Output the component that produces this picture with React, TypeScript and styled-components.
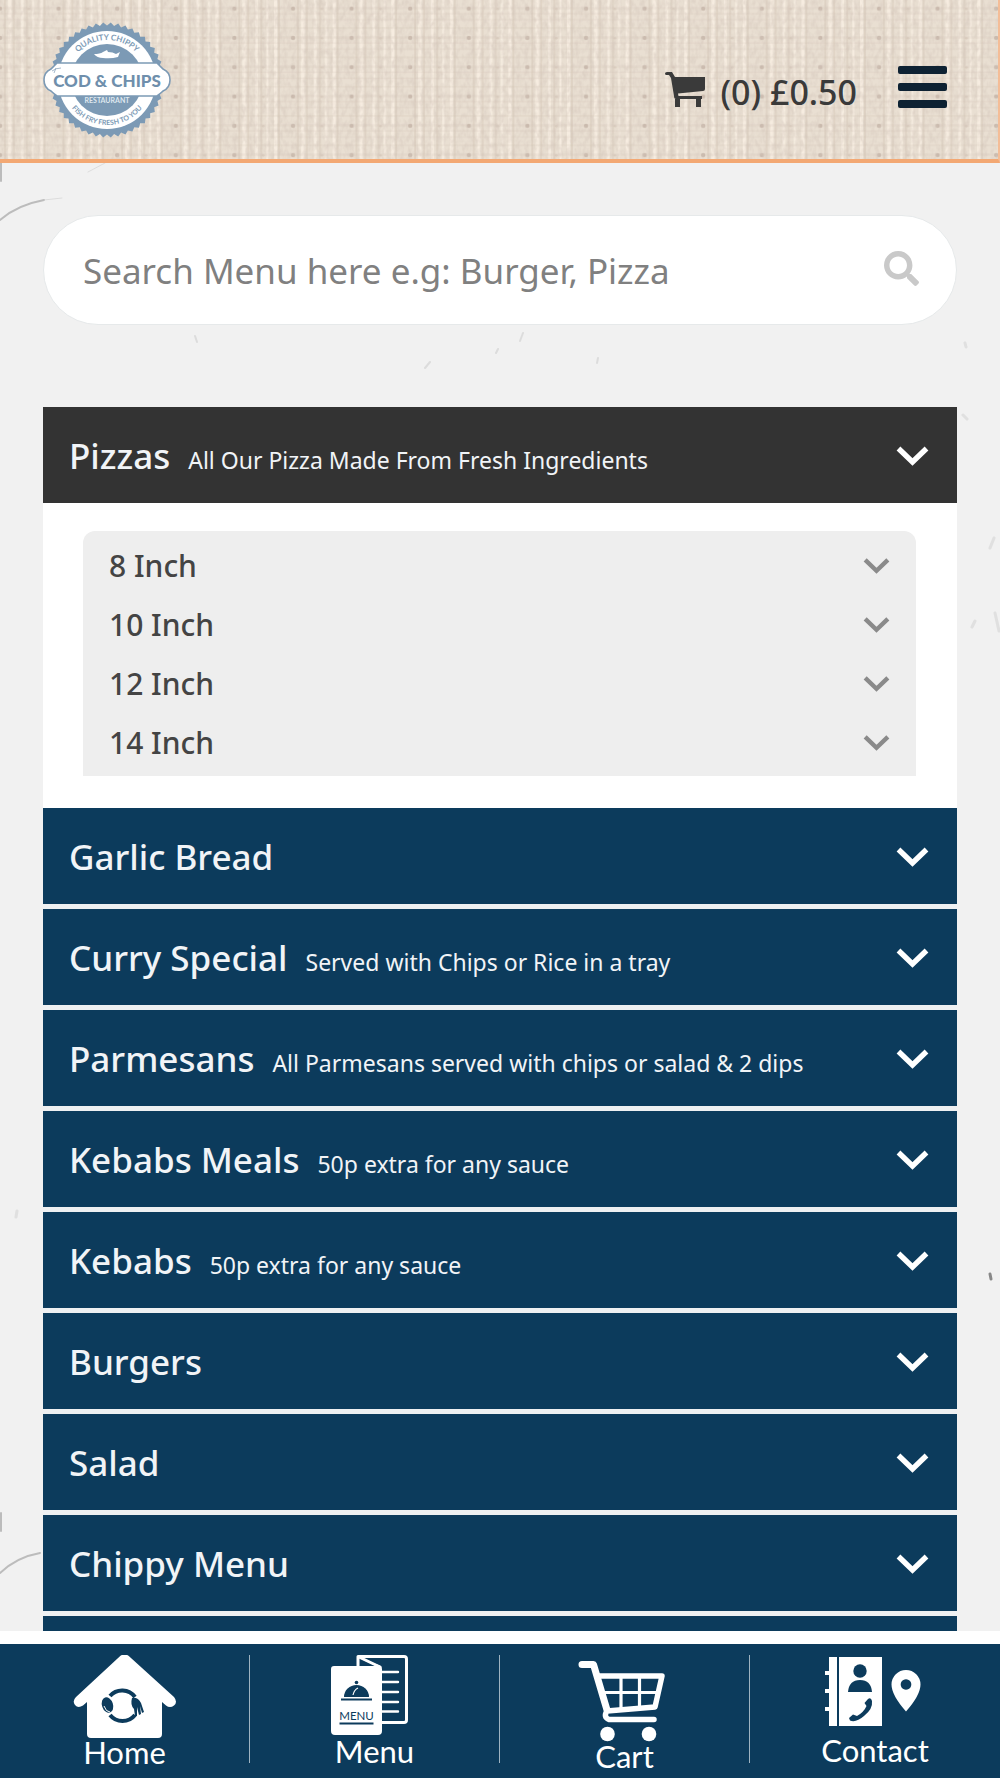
import React, { useState } from "react";
import styled, { createGlobalStyle } from "styled-components";
import { FaSearch } from "react-icons/fa";

const sans = `"Noto Sans", "Open Sans", "Liberation Sans", sans-serif`;
const navy = "#0c3b5c";

const GlobalStyle = createGlobalStyle`
  *, *::before, *::after { box-sizing: border-box; }
  body { margin: 0; background: #f1f1f1; font-family: ${sans}; color: #333; }
  button, input { font: inherit; color: inherit; }
`;

const Screen = styled.div`
  display: flex;
  flex-direction: column;
  height: 100vh;
`;

const Header = styled.header`
  position: relative;
  display: flex;
  align-items: center;
  justify-content: space-between;
  flex: none;
  padding: 20px 51px 20px 40px;
  border-bottom: 4px solid #f3a873;
  border-right: 2px solid #f4bd97;
  background: #e9dfd2;
`;

const Fabric = styled.svg`
  position: absolute;
  inset: 0;
  width: 100%;
  height: 100%;
`;

const LogoLink = styled.a`
  position: relative;
  display: block;
  line-height: 0;
`;

const HeaderActions = styled.div`
  position: relative;
  display: flex;
  align-items: center;
  gap: 41px;
  padding-top: 20px;
`;

const Basket = styled.a`
  display: flex;
  align-items: flex-end;
  gap: 15px;
  padding-top: 4px;
  color: #3a3a3a;
  font-size: 34px;
  line-height: 44px;
  font-weight: 500;
  text-decoration: none;
  svg { margin-bottom: 5px; }
`;

const MenuToggle = styled.button`
  display: flex;
  flex-direction: column;
  gap: 9px;
  width: 49px;
  margin-bottom: 6px;
  padding: 0;
  border: 0;
  background: none;
  cursor: pointer;
`;

const Bar = styled.span`
  height: 8px;
  border-radius: 2px;
  background: #0e2233;
`;

const Content = styled.main`
  position: relative;
  flex: 1;
  min-height: 0;
  overflow: hidden;
  padding: 52px 43px 0;
`;

const Scratches = styled.svg`
  position: absolute;
  inset: 0;
  width: 100%;
  height: 100%;
`;

const SearchBox = styled.label`
  position: relative;
  display: flex;
  align-items: center;
  height: 110px;
  margin-bottom: 82px;
  padding: 0 37px 4px 39px;
  border: 1px solid #e6e9ea;
  border-radius: 55px;
  background: #fff;
  color: #c9c9c9;
`;

const SearchInput = styled.input`
  flex: 1;
  min-width: 0;
  padding: 6px 0 0;
  border: 0;
  outline: 0;
  background: none;
  font-size: 35px;
  line-height: 48px;
  color: #333;
  &::placeholder { color: #808080; opacity: 1; }
`;

const Categories = styled.div`
  position: relative;
  display: flex;
  flex-direction: column;
`;

const CategoryBlock = styled.section`
  padding-bottom: 5px;
  background: #eef0f2;
`;

const CategoryRow = styled.button<{ $open: boolean }>`
  display: flex;
  align-items: center;
  width: 100%;
  height: 96px;
  padding: 0 28px 0 26px;
  border: 0;
  background: ${(p) => (p.$open ? "#333" : navy)};
  color: #f1f4f7;
  text-align: left;
  white-space: nowrap;
  cursor: pointer;
`;

const CategoryText = styled.span`
  display: flex;
  flex: 1;
  align-items: baseline;
  gap: 18px;
  padding-top: 2px;
`;

const CategoryName = styled.span`
  font-size: 35px;
  line-height: 48px;
  font-weight: 500;
`;

const CategoryNote = styled.span`
  font-size: 23px;
  line-height: 32px;
`;

const Panel = styled.div`
  margin-bottom: -5px;
  padding: 28px 41px 32px 40px;
  background: #fff;
`;

const Sizes = styled.ul`
  margin: 0;
  padding: 5px 0 4px;
  border-radius: 12px 12px 0 0;
  background: #eee;
  list-style: none;
`;

const SizeRow = styled.button`
  display: flex;
  align-items: center;
  justify-content: space-between;
  width: 100%;
  height: 59px;
  padding: 0 26px;
  border: 0;
  background: none;
  color: #444;
  font-size: 30px;
  font-weight: 500;
  cursor: pointer;
`;

const Nav = styled.nav`
  display: grid;
  grid-template-columns: repeat(4, 1fr);
  flex: none;
  padding: 11px 0 15px;
  background: ${navy};
  box-shadow: 0 -13px 0 #fff;
  margin-top: 13px;
`;

const NavLink = styled.a`
  display: flex;
  flex-direction: column;
  align-items: center;
  height: 108px;
  border-right: 1px solid #9fb3c1;
  color: #fff;
  font-family: Lato, "Open Sans", sans-serif;
  font-size: 31px;
  line-height: 23px;
  text-decoration: none;
  &:last-child { border-right: 0; }
  svg { flex: none; }
`;

function Chevron({ small = false }: { small?: boolean }) {
  return (
    <svg
      width={small ? 27 : 33}
      height={small ? 17 : 21}
      viewBox="0 0 33 21"
      fill="none"
      stroke={small ? "#8a8a8a" : "#fff"}
      strokeWidth="5.4"
      aria-hidden="true"
    >
      <path d="M2.5 3.5 16.5 17 30.5 3.5" strokeLinejoin="miter" />
    </svg>
  );
}

function FabricTexture() {
  return (
    <Fabric aria-hidden="true">
      <defs>
        <pattern id="weave" width="58.6" height="29.3" patternUnits="userSpaceOnUse" patternTransform="translate(-20 -6)">
          <g fill="#f8efe3" opacity=".85">
            <rect x="1" width="3" height="29.3" />
            <rect x="28" width="3.4" height="29.3" />
            <rect x="41" width="2.6" height="29.3" />
            <rect x="52" width="2" height="29.3" />
          </g>
          <g fill="#cfc0b0" opacity=".4">
            <rect x="5" width="2" height="29.3" />
            <rect x="24" width="2" height="29.3" />
            <rect x="33" width="1.6" height="29.3" />
            <rect x="46" width="2" height="29.3" />
          </g>
          <g fill="#c4b3a4" opacity=".16">
            <rect y="4" width="58.6" height="1.6" />
            <rect y="13" width="58.6" height="2.4" />
            <rect y="19" width="58.6" height="1.6" />
            <rect y="25" width="58.6" height="1.6" />
          </g>
          <circle cx="20" cy="14.6" r="2.2" fill="#b09c90" opacity=".5" />
          <circle cx="49" cy="15" r="1.4" fill="#b9a594" opacity=".25" />
        </pattern>
        <filter id="grain" x="0" y="0" width="100%" height="100%">
          <feTurbulence type="fractalNoise" baseFrequency=".24 .14" numOctaves="2" seed="4" />
          <feColorMatrix values="0 0 0 0 .66  0 0 0 0 .57  0 0 0 0 .5  1.6 0 0 0 -.6" />
        </filter>
      </defs>
      <rect width="100%" height="100%" fill="url(#weave)" />
      <rect width="100%" height="100%" filter="url(#grain)" opacity=".7" />
    </Fabric>
  );
}

function PaperScratches() {
  return (
    <Scratches aria-hidden="true" fill="none" stroke="#cfcfcf" strokeLinecap="round">
      <path d="M0 57Q17 42 44 37" stroke="#a5a5a5" strokeWidth="2" opacity=".7" />
      <path d="M44 37 62 35M88 9 105 0" strokeWidth="1" opacity=".6" />
      <path d="M1 0V18" stroke="#999" strokeWidth="2" opacity=".6" />
      <path d="M0 1410Q17 1394 40 1390" stroke="#a5a5a5" strokeWidth="2" opacity=".7" />
      <path d="M1 1350V1368" stroke="#999" strokeWidth="2" opacity=".6" />
      <path d="M195 173 197 179M523 170 520 178M498 186 496 190M598 195 597 200M430 199 425 205M700 145 694 154" strokeWidth="2" opacity=".6" />
      <path d="M965 180 966 184M963 252 967 256M975 458 972 464M995 450 999 468M17 1048 16 1054M994 375 990 385" strokeWidth="3" opacity=".5" />
      <path d="M990 1111 991 1116" stroke="#888" strokeWidth="3" />
    </Scratches>
  );
}

function Logo() {
  const blue = "#7c9ab5";
  const points = Array.from({ length: 96 }, (_, i) => {
    const angle = (i / 96) * Math.PI * 2;
    const r = i % 2 ? 57.5 : 54.5;
    return `${(67 + r * Math.cos(angle)).toFixed(1)},${(60 + r * Math.sin(angle)).toFixed(1)}`;
  }).join(" ");
  return (
    <svg width="134" height="119" viewBox="0 0 134 119" role="img" fontFamily="Lato, sans-serif">
      <polygon points={points} fill={blue} />
      <circle cx="67" cy="60" r="49" fill="#fff" />
      <circle cx="67" cy="60" r="36" fill={blue} />
      <path id="logo-top" d="M27 60a40 40 0 0 1 80 0" fill="none" />
      <path id="logo-bottom" d="M22 60a45 45 0 0 0 90 0" fill="none" />
      <text fontSize="8" fontWeight="700" fill={blue} textAnchor="middle">
        <textPath href="#logo-top" startOffset="50%">QUALITY CHIPPY</textPath>
      </text>
      <text fontSize="7" fontWeight="700" fill={blue} textAnchor="middle">
        <textPath href="#logo-bottom" startOffset="50%">FISH FRY FRESH TO YOU</textPath>
      </text>
      <path d="M54 34q6 0 9-2l4-2 1 2q5 0 8 2l4-2-2 5q-7 2-15 1-6 0-9-4z" fill="#fff" />
      <path d="M17 43H117q4 4 6 6 7 3 7 11t-7 11q-2 2-6 5H17q-4-3-6-5-7-3-7-11t7-11q2-2 6-6z" fill="#fff" stroke={blue} strokeWidth="1.6" />
      <path d="M12 51q4-3 9-3M14 53l2-5" stroke={blue} strokeWidth=".7" fill="none" />
      <text x="67" y="67" fontSize="17" fontWeight="900" fill="#6f8fac" textAnchor="middle">COD &amp; CHIPS</text>
      <text x="67" y="83" fontSize="7" fontWeight="700" fill="#dfe8ef" textAnchor="middle">RESTAURANT</text>
    </svg>
  );
}

function BasketIcon() {
  return (
    <svg width="40" height="37" viewBox="0 0 40 37" fill="#3a3a3a" aria-hidden="true">
      <path d="M0 1.5Q0 0 2 0H7L10 5H40V17Q40 19 38 19L13 21.500 13.500 24H37V27H11Q9 27 9 24L6 6 4 3H1.500Q0 3 0 1.500z" />
      <path d="M10 27h5v8H10zM31 27h5v8H31z" />
    </svg>
  );
}

function HomeIcon() {
  return (
    <svg width="104" height="86" viewBox="0 0 104 86" aria-hidden="true">
      <path
        d="M47.500.8Q51.500-1.800 55.500.8L101 42Q105 47 101 50.500 97 53.500 93 50.500L89 47V79Q89 83 85 83H18Q14 83 14 79V47L10 50.500Q5 53.500 2 50 -1 46 3 42z"
        fill="#fff"
      />
      <g fill="none" stroke={navy} strokeWidth="4">
        <path d="M37 41A16 16 0 0 1 62 42M62 60A16 16 0 0 1 37 60" />
      </g>
      <ellipse cx="34.500" cy="50" rx="5.500" ry="8" fill={navy} transform="rotate(-18 34.500 50)" />
      <path d="M31 51q2 6 6 6" stroke="#fff" strokeWidth="1" fill="none" />
      <path d="M59 43q6-1 9 5l3 9-2 1-2-7 1 8-2 1-2-8 0 9-2 0-1-7q-4-4-2-11z" fill={navy} />
    </svg>
  );
}

function MenuIcon() {
  return (
    <svg width="88" height="85" viewBox="0 0 88 85" aria-hidden="true">
      <g fill="none" stroke="#fff" strokeWidth="3" strokeLinecap="round" strokeLinejoin="round">
        <path d="M27 12V1.500H73Q75.500 1.500 75.500 4V65Q75.500 67.500 73 67.500H50" />
        <path d="M28 2 49 12" />
        <path d="M50 17H67M50 27H67M50 37H67M50 47H67M50 56.500H67" strokeWidth="2.400" />
      </g>
      <path d="M3 11H45L28 3 49 10.500Q51 11 51 14V76Q51 80 47 80H4Q0 80 0 76V14Q0 11 3 11z" fill="#fff" />
      <path d="M13 42a12.500 12 0 0 1 25 0z" fill={navy} />
      <path d="M10 44.500H41" stroke={navy} strokeWidth="2" />
      <circle cx="25.500" cy="27.500" r="1.800" fill={navy} />
      <path d="M22 40q1-5 5-7" stroke="#fff" fill="none" strokeWidth="1.200" />
      <text x="25.500" y="64.500" textAnchor="middle" fontSize="11.500" fontFamily="Lato, sans-serif" fill={navy}>MENU</text>
      <path d="M8.500 68.500H42.500" stroke={navy} strokeWidth="1.800" />
    </svg>
  );
}

function CartIcon() {
  return (
    <svg width="94" height="90" viewBox="0 0 94 90" aria-hidden="true">
      <g fill="none" stroke="#fff" strokeLinecap="round" strokeLinejoin="round">
        <path d="M4 9.500H15.500L29 55" strokeWidth="7" />
        <path d="M20 21H84L77 52 29 56Q25 62 31 64.500L76 64.500" strokeWidth="5.500" />
        <path d="M43 22V53M61.500 22V52M24 37.500H80" strokeWidth="3.200" />
      </g>
      <circle cx="29.500" cy="79" r="7.300" fill="#fff" />
      <circle cx="71" cy="79" r="7.300" fill="#fff" />
    </svg>
  );
}

function ContactIcon() {
  return (
    <svg width="100" height="84" viewBox="0 0 100 84" aria-hidden="true">
      <path d="M4 2H12V71H4V56H0V52H4V38H0V34H4V20H0V16H4zM14 2H57V71H14z" fill="#fff" />
      <circle cx="35" cy="16" r="6.700" fill={navy} />
      <path d="M23 37q1-12 12-12t12 12z" fill={navy} />
      <path d="M43 44Q46 42 47 46 48 54 39 61 31 68 25 65.500L24 63 28 59.500 32 61Q39 57 41.500 51L39.500 48z" fill={navy} />
      <path
        fillRule="evenodd"
        d="M81 15a14.500 14.500 0 0 1 14.500 14.500Q95.500 40 81 56.500 66.500 40 66.500 29.500A14.500 14.500 0 0 1 81 15zm0 9.200a5.300 5.300 0 1 0 .01 0z"
        fill="#fff"
      />
    </svg>
  );
}

const categories = [
  { name: "Pizzas", note: "All Our Pizza Made From Fresh Ingredients", sizes: ["8 Inch", "10 Inch", "12 Inch", "14 Inch"] },
  { name: "Garlic Bread" },
  { name: "Curry Special", note: "Served with Chips or Rice in a tray" },
  { name: "Parmesans", note: "All Parmesans served with chips or salad & 2 dips" },
  { name: "Kebabs Meals", note: "50p extra for any sauce" },
  { name: "Kebabs", note: "50p extra for any sauce" },
  { name: "Burgers" },
  { name: "Salad" },
  { name: "Chippy Menu" },
  { name: "" },
];

const links = [
  { label: "Home", Icon: HomeIcon },
  { label: "Menu", Icon: MenuIcon },
  { label: "Cart", Icon: CartIcon },
  { label: "Contact", Icon: ContactIcon },
];

export default function App() {
  const [open, setOpen] = useState(0);
  return (
    <Screen>
      <GlobalStyle />
      <Header>
        <FabricTexture />
        <LogoLink href="#"><Logo /></LogoLink>
        <HeaderActions>
          <Basket href="#"><BasketIcon />(0) £0.50</Basket>
          <MenuToggle type="button"><Bar /><Bar /><Bar /></MenuToggle>
        </HeaderActions>
      </Header>
      <Content>
        <PaperScratches />
        <SearchBox>
          <SearchInput type="text" placeholder="Search Menu here e.g: Burger, Pizza" />
          <FaSearch size={35} aria-hidden="true" />
        </SearchBox>
        <Categories>
          {categories.map(({ name, note, sizes }, i) => (
            <CategoryBlock key={i}>
              <CategoryRow type="button" $open={open === i} aria-expanded={open === i} onClick={() => setOpen(open === i ? -1 : i)}>
                <CategoryText>
                  <CategoryName>{name}</CategoryName>
                  {note && <CategoryNote>{note}</CategoryNote>}
                </CategoryText>
                <Chevron />
              </CategoryRow>
              {open === i && sizes && (
                <Panel>
                  <Sizes>
                    {sizes.map((size) => (
                      <li key={size}>
                        <SizeRow type="button">{size}<Chevron small /></SizeRow>
                      </li>
                    ))}
                  </Sizes>
                </Panel>
              )}
            </CategoryBlock>
          ))}
        </Categories>
      </Content>
      <Nav>
        {links.map(({ label, Icon }) => (
          <NavLink key={label} href="#"><Icon />{label}</NavLink>
        ))}
      </Nav>
    </Screen>
  );
}
